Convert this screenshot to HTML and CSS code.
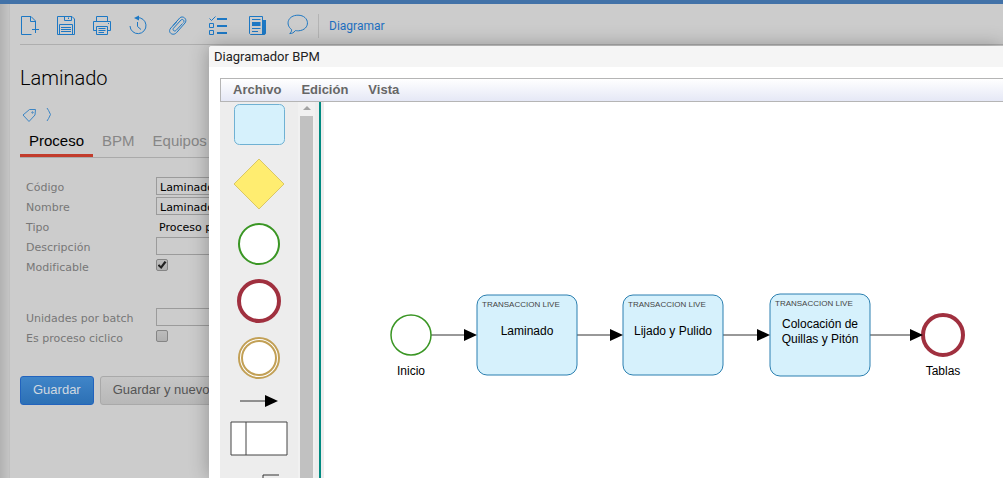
FILE: index.html
```
<!DOCTYPE html>
<html lang="es">
<head>
    <meta charset="UTF-8">
    <meta name="viewport" content="width=device-width, initial-scale=1.0">
    <title>Laminado - Diagramador BPM</title>
    <link rel="stylesheet" href="styles.css">
</head>
<body>
    <div class="page">
        <nav class="toolbar">
            <div class="tools">
                <button class="tool" aria-label="Nuevo">
                    <svg width="20" height="20" viewBox="0 0 20 20"><path d="M11.5 18.5H1.5V.5H11L15.5 5v6M10.5 .5V5.5H15.5M15.5 10V17M12 13.5h7"/></svg>
                </button>
                <button class="tool" aria-label="Guardar">
                    <svg width="20" height="20" viewBox="0 0 20 20"><path d="M1.5 .5H16L18.5 3V18.5H1.5ZM8.5 .5V4.5H15.5V.5M12.5 1.5v1.5M3.5 18.5V8.5H16.5V18.5M5 11.5H15M5 13.5H15M5 15.5H15"/></svg>
                </button>
                <button class="tool" aria-label="Imprimir">
                    <svg width="20" height="20" viewBox="0 0 20 20"><path d="M4.5 5.5V.5H15.5V5.5M4.5 14.5H1.5V5.5H18.5V14.5H15.5M4.5 10.5H15.5V18.5H4.5ZM6.5 12.5H13.5M6.5 14.5H13.5M6.5 16.5H12M16 7.5h1"/></svg>
                </button>
                <button class="tool" aria-label="Historial">
                    <svg width="20" height="20" viewBox="0 0 20 20"><path d="M9 1.7A8 8 0 1 1 2 10M9.5 6v4.5l3.5 3"/><path class="solid" d="M11-.5V4.5L6 2Z"/></svg>
                </button>
            </div>
            <div class="tools tools-wide">
                <button class="tool" aria-label="Adjuntar">
                    <svg width="20" height="20" viewBox="0 0 20 20"><path d="M14.5 7.5L8 14.5C6.5 16 4 14 5.5 12.2L13 4C14.5 2.5 17 4.5 15.5 6.5M5 9.5L11.7 2C14.5-1 20 3 17 7L8.5 16.7C5 20.5-1 16.5 2.8 12L8.5 6"/></svg>
                </button>
                <button class="tool" aria-label="Tareas">
                    <svg width="20" height="20" viewBox="0 0 20 20"><path d="M1.5 2.5L3.5 4.5L7.5 .5M1.5 7.5h4v4h-4ZM1.5 14.5h4v4h-4Z"/><path class="solid" d="M9 2h10v2H9ZM9 9h10v2H9ZM9 16h10v2H9Z"/></svg>
                </button>
                <button class="tool" aria-label="Noticias">
                    <svg width="20" height="20" viewBox="0 0 20 20"><path d="M1.5 .5H14.5V18.5H2.5L1.5 17.5ZM4 3.5H12.5M4 12.5H12.5M4 15.5H10"/><path class="solid" d="M4 6h8.5v4H4ZM14.5 4H18V17.5L16.5 19H14Z"/></svg>
                </button>
                <button class="tool" aria-label="Comentarios">
                    <svg width="20" height="20" viewBox="0 0 20 20"><path d="M3.5 13.5C-3 8.5 0-.8 10-.8C22-.8 23 14 10.5 14.8C9 14.9 7.5 14.5 7.5 14.5C5.5 17 4 17.5 1.7 17.5C3.2 16.2 3.7 15.5 3.5 13.5Z"/></svg>
                </button>
            </div>
            <a class="tool-link" href="#">Diagramar</a>
        </nav>

        <h1>Laminado</h1>

        <div class="tags">
            <svg width="16" height="16" viewBox="0 0 16 16"><path d="M3 8L9.5 2.5L15.5 2.5L15 8L9 14.5Z"/><circle cx="12.5" cy="5.5" r=".7"/></svg>
            <svg width="6" height="16" viewBox="0 0 6 16"><path d="M1 1Q2.5 3 4.5 7.5Q2.5 12 1 14"/></svg>
        </div>

        <div class="tabs">
            <button class="tab active">Proceso</button>
            <button class="tab">BPM</button>
            <button class="tab">Equipos</button>
        </div>

        <form class="form">
            <div class="row">
                <label for="codigo">Código</label>
                <input type="text" id="codigo" value="Laminado">
            </div>
            <div class="row">
                <label for="nombre">Nombre</label>
                <input type="text" id="nombre" value="Laminado">
            </div>
            <div class="row">
                <span class="name">Tipo</span>
                <span class="value">Proceso productivo</span>
            </div>
            <div class="row">
                <label for="descripcion">Descripción</label>
                <input type="text" id="descripcion">
            </div>
            <div class="row">
                <label for="modificable">Modificable</label>
                <input type="checkbox" id="modificable" checked>
            </div>
            <div class="row group">
                <label for="unidades">Unidades por batch</label>
                <input type="text" id="unidades">
            </div>
            <div class="row">
                <label for="ciclico">Es proceso ciclico</label>
                <input type="checkbox" id="ciclico">
            </div>
            <div class="actions">
                <button type="button" class="btn primary">Guardar</button>
                <button type="button" class="btn">Guardar y nuevo</button>
            </div>
        </form>
    </div>

    <!-- Diagram window -->
    <div class="dialog" role="dialog" aria-labelledby="dialog-title">
        <h2 id="dialog-title">Diagramador BPM</h2>
        <div class="editor">
            <div class="menubar">
                <button>Archivo</button>
                <button>Edición</button>
                <button>Vista</button>
            </div>
            <div class="workspace">
                <div class="palette">
                    <button aria-label="Tarea"><svg width="54" height="42"><rect class="task" x="2.5" y=".5" width="50" height="40" rx="5"/></svg></button>
                    <button aria-label="Decisión"><svg width="52" height="52"><path class="gateway" d="M26 1L51 26L26 51L1 26Z"/></svg></button>
                    <button aria-label="Inicio"><svg width="44" height="44"><circle class="start" cx="22" cy="22" r="20"/></svg></button>
                    <button aria-label="Fin"><svg width="46" height="46"><circle class="end" cx="23" cy="23" r="20"/></svg></button>
                    <button aria-label="Intermedio"><svg width="44" height="44"><circle class="middle" cx="22" cy="22" r="20"/><circle class="middle" cx="22" cy="22" r="17"/></svg></button>
                    <button aria-label="Conector"><svg width="40" height="16"><path class="line" d="M1 9H27"/><path class="arrow" d="M26 3L39 9L26 15Z"/></svg></button>
                    <button aria-label="Carril"><svg width="60" height="36"><path class="pool" d="M2 2H58V35H2ZM17 2V35"/></svg></button>
                    <button aria-label="Anotación"><svg width="40" height="40"><path class="line" d="M44 7H24V39H44"/></svg></button>
                </div>
                <div class="scrollbar"><span class="up"></span><span class="thumb"></span></div>
                <div class="splitter"></div>
                <svg class="canvas">
                    <path class="line" d="M107 233H141M253 233H287M399 233H434M546 233H587"/>
                    <circle class="start" cx="87" cy="233" r="20" stroke-width="1.5"/>
                    <circle class="end" cx="619" cy="233" r="20"/>
                    <rect class="task" x="153" y="193" width="100" height="80" rx="10"/>
                    <rect class="task" x="299" y="193" width="100" height="80" rx="10"/>
                    <rect class="task" x="446" y="192" width="100" height="82" rx="10"/>
                    <path class="arrow" d="M140 227L153 233L140 239ZM286 227L299 233L286 239ZM433 227L446 233L433 239ZM586 227L599 233L586 239Z"/>
                    <text class="kind" x="158" y="205">TRANSACCION LIVE</text>
                    <text class="kind" x="304" y="205">TRANSACCION LIVE</text>
                    <text class="kind" x="451" y="204">TRANSACCION LIVE</text>
                    <text class="caption" x="203" y="233">Laminado</text>
                    <text class="caption" x="349" y="233">Lijado y Pulido</text>
                    <text class="caption" x="496" y="226">Colocación de</text>
                    <text class="caption" x="496" y="241">Quillas y Pitón</text>
                    <text class="caption" x="87" y="273">Inicio</text>
                    <text class="caption" x="619" y="273">Tablas</text>
                </svg>
            </div>
        </div>
    </div>
</body>
</html>
```
FILE: styles.css
```
* {
    box-sizing: border-box;
}

body {
    margin: 0;
    height: 100vh;
    overflow: hidden;
    position: relative;
    border-top: 4px solid #4272a8;
    padding-left: 9px;
    background: linear-gradient(to right, #b2b2b2, #c4c4c4 9px);
    font-family: "Liberation Sans", Arial, sans-serif;
}

button {
    border: none;
    background: none;
    padding: 0;
    font-family: inherit;
    cursor: pointer;
}

svg {
    display: block;
    fill: none;
}

.page {
    min-height: 100%;
    padding-left: 10px;
    border-left: 1px solid #bfbfbf;
    background: #ccc;
}

.toolbar {
    display: flex;
    align-items: center;
    height: 41px;
    padding-top: 4px;
    border-bottom: 1px solid #aeaeae;
}

.tools {
    display: flex;
    gap: 16px;
}

.tools-wide {
    gap: 20px;
    margin: 0 10px 0 20px;
}

.tool svg {
    overflow: visible;
    stroke: #1d78c4;
}

.tool .solid {
    fill: #1d78c4;
    stroke: none;
}

.tool-link {
    border-left: 1px solid #b4b4b4;
    padding-left: 10px;
    font: 12px/24px Roboto, sans-serif;
    color: #1d6fc0;
    text-decoration: none;
}

h1 {
    margin: 21px 0 17px;
    font: 300 20px/24px Roboto, sans-serif;
    color: #000;
}

.tags {
    display: flex;
    gap: 10px;
}

.tags svg {
    stroke: #3c85c4;
}

.tabs {
    display: flex;
    margin-top: 9px;
    border-bottom: 1px solid #aaa;
}

.tab {
    padding: 0 9px 4px;
    border-bottom: 3px solid transparent;
    font-size: 15px;
    line-height: 18px;
    color: #868686;
}

.tab.active {
    color: #000;
    border-bottom-color: #c23c2c;
}

.form {
    margin-top: 18px;
    font: 11px "DejaVu Sans", Verdana, sans-serif;
}

.row {
    display: flex;
    align-items: center;
    height: 20px;
}

.row.group {
    margin-top: 31px;
}

.row label,
.row .name {
    width: 136px;
    padding: 3px 0 0 6px;
    color: #777;
    line-height: 20px;
}

.row .value {
    padding: 3px 0 0 3px;
}

input[type="text"] {
    width: 200px;
    height: 18px;
    padding: 2px 3px 0;
    border: 1px solid #9b9b9b;
    background: transparent;
    font: inherit;
    color: #000;
}

input[type="checkbox"] {
    appearance: none;
    display: grid;
    place-items: center;
    width: 12px;
    height: 12px;
    margin: 0 0 2px;
    border: 1px solid #858585;
    border-radius: 2px;
    background: linear-gradient(#bcbcbc, #b0b0b0);
}

input[type="checkbox"]:checked::before {
    content: "";
    width: 9px;
    height: 8px;
    background: #222;
    clip-path: polygon(0 55%, 20% 40%, 38% 62%, 78% 0, 100% 15%, 42% 100%);
}

.actions {
    display: flex;
    gap: 6px;
    margin-top: 29px;
}

.btn {
    height: 29px;
    padding: 0 12px 2px;
    border: 1px solid #a9a9a9;
    border-radius: 3px;
    background: linear-gradient(#c6c6c6, #b8b8b8);
    font: 13px "Liberation Sans", Arial, sans-serif;
    color: #555;
}

.btn.primary {
    border-color: #2263bd;
    background: linear-gradient(#4085c8, #2c70b5);
    color: #d0d8e0;
}

.dialog {
    position: absolute;
    top: 42px;
    left: 209px;
    right: 0;
    bottom: 0;
    display: flex;
    flex-direction: column;
    border-radius: 3px 0 0 0;
    background: #fff;
    box-shadow: 0 0 20px rgba(0, 0, 0, 0.3);
}

.dialog h2 {
    margin: 0;
    padding-left: 5px;
    border-radius: 3px 0 0 0;
    background: #f5f5f5;
    font: 13px/21px Roboto, sans-serif;
    color: #222;
}

.editor {
    flex: 1;
    min-height: 0;
    display: flex;
    flex-direction: column;
    padding: 11px 0 0 11px;
}

.menubar {
    display: flex;
    gap: 20px;
    padding-left: 12px;
    border: solid #b5b5b5;
    border-width: 1px 0 1px 1px;
    background: linear-gradient(#fff, #e5e8f6);
}

.menubar button {
    font-size: 13px;
    line-height: 22px;
    font-weight: bold;
    color: #666;
}

.workspace {
    flex: 1;
    min-height: 0;
    display: flex;
}

.palette {
    display: flex;
    flex-direction: column;
    align-items: center;
    gap: 12px;
    width: 78px;
    padding-top: 2px;
    overflow: hidden;
    background: #ededed;
}

.palette button {
    flex: none;
}

.scrollbar {
    display: flex;
    flex-direction: column;
    align-items: center;
    width: 17px;
    background: #f1f1f1;
}

.scrollbar .up {
    margin: 4px 0 6px;
    border: solid transparent;
    border-width: 0 4px 4px;
    border-bottom-color: #a3a3a3;
}

.scrollbar .thumb {
    flex: 1;
    width: 13px;
    background: #c1c1c1;
}

.splitter {
    width: 9px;
    background: linear-gradient(to right, #ededed 4px, #008a80 4px, #008a80 6px, #ededed 6px);
}

.canvas {
    flex: 1;
    min-width: 0;
}

/* Diagram shapes */
.task {
    fill: #d6f1fc;
    stroke: #2a7fb0;
}

.palette .task {
    stroke: #6fb1d3;
}

.gateway {
    fill: #ffed70;
    stroke: #d9c767;
}

.start {
    fill: #fff;
    stroke: #3a9624;
}

.palette .start {
    stroke-width: 2px;
}

.end {
    fill: #fff;
    stroke: #a0303f;
    stroke-width: 4px;
}

.middle {
    fill: #fff;
    stroke: #c2a056;
    stroke-width: 2px;
}

.pool {
    fill: #fff;
    stroke: #444;
}

.line {
    stroke: #333;
}

.arrow {
    fill: #000;
}

.kind {
    fill: #444;
    font-size: 8px;
}

.caption {
    fill: #000;
    font-size: 12px;
    text-anchor: middle;
}
```
